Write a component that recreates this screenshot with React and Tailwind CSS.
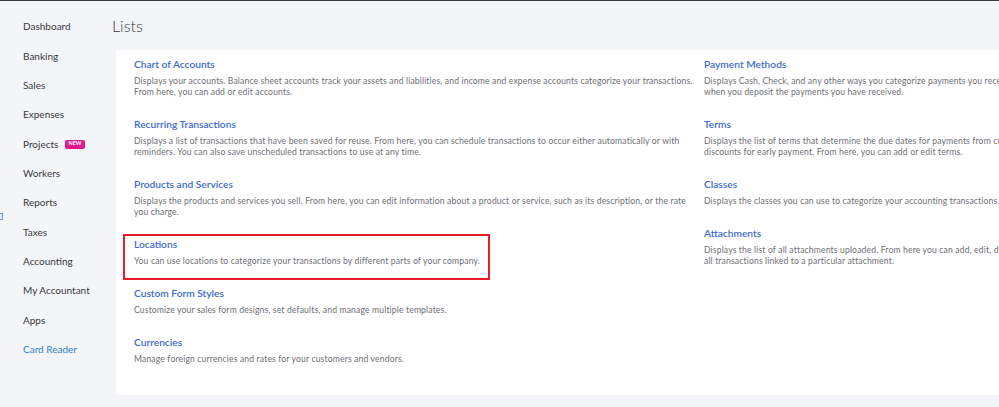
const navItems = [
  'Dashboard',
  'Banking',
  'Sales',
  'Expenses',
  'Projects',
  'Workers',
  'Reports',
  'Taxes',
  'Accounting',
  'My Accountant',
  'Apps',
];

const leftLists = [
  {
    title: 'Chart of Accounts',
    lines: [
      'Displays your accounts. Balance sheet accounts track your assets and liabilities, and income and expense accounts categorize your transactions.',
      'From here, you can add or edit accounts.',
    ],
  },
  {
    title: 'Recurring Transactions',
    lines: [
      'Displays a list of transactions that have been saved for reuse. From here, you can schedule transactions to occur either automatically or with',
      'reminders. You can also save unscheduled transactions to use at any time.',
    ],
  },
  {
    title: 'Products and Services',
    lines: [
      'Displays the products and services you sell. From here, you can edit information about a product or service, such as its description, or the rate',
      'you charge.',
    ],
  },
  {
    title: 'Locations',
    lines: ['You can use locations to categorize your transactions by different parts of your company.'],
    highlight: true,
  },
  {
    title: 'Custom Form Styles',
    lines: ['Customize your sales form designs, set defaults, and manage multiple templates.'],
  },
  {
    title: 'Currencies',
    lines: ['Manage foreign currencies and rates for your customers and vendors.'],
  },
];

const rightLists = [
  {
    title: 'Payment Methods',
    lines: [
      'Displays Cash, Check, and any other ways you categorize payments you receive from customers. Also set up payment methods to use',
      'when you deposit the payments you have received.',
    ],
  },
  {
    title: 'Terms',
    lines: [
      'Displays the list of terms that determine the due dates for payments from customers, or payments to vendors. Terms can also specify',
      'discounts for early payment. From here, you can add or edit terms.',
    ],
  },
  {
    title: 'Classes',
    lines: ['Displays the classes you can use to categorize your accounting transactions.'],
  },
  {
    title: 'Attachments',
    lines: [
      'Displays the list of all attachments uploaded. From here you can add, edit, download, and export your attachments. You can also see',
      'all transactions linked to a particular attachment.',
    ],
  },
];

const ListSection = ({ item }) => (
  <div className="relative mb-[19px]">
    {/* red annotation box round the highlighted entry */}
    {item.highlight && (
      <div className="absolute left-[-11px] top-[-3px] w-[367px] h-[46px] border-2 border-[#ea1c24]"></div>
    )}
    <div className="text-[10.2px] leading-[14px] font-semibold text-[#3a6bcf] whitespace-nowrap">{item.title}</div>
    <div className="mt-[5px] text-[8.6px] leading-[11px] tracking-[0.15px] text-[#6e6f75]">
      {item.lines.map((line) => (
        <div key={line} className="whitespace-nowrap">{line}</div>
      ))}
    </div>
  </div>
);

export default function App() {
  return (
    <div
      className="relative w-[999px] h-[407px] overflow-hidden bg-[#f4f5f8] border-t border-[#393a3d]"
      style={{ fontFamily: 'Lato, "Open Sans", sans-serif' }}
    >
      {/* little collapse handle at the left edge */}
      <div className="absolute left-[-2px] top-[212px] w-[5px] h-[7px] border border-[#7d9bc4] bg-[#dfe8f5]"></div>

      <div className="flex">
        {/* Sidebar */}
        <nav className="w-[112px] shrink-0 pt-[11px] pl-[23px]">
          {navItems.map((name) => (
            <div key={name} className="h-[29.36px] flex items-center text-[10px] text-[#393a3d] whitespace-nowrap">
              {name}
              {name === 'Projects' && (
                <span className="ml-[7px] px-[3px] h-[9px] flex items-center rounded-[2px] bg-[#e5178a] text-white text-[5.5px] font-bold leading-none">
                  NEW
                </span>
              )}
            </div>
          ))}
          <div className="h-[29.36px] flex items-center text-[10px] text-[#2d82cf] whitespace-nowrap">Card Reader</div>
        </nav>

        {/* Main */}
        <main className="flex-1 min-w-0">
          <h1 className="h-[49px] pt-[15px] text-[16px] leading-[20px] font-light text-[#393a3d]">Lists</h1>
          <div className="ml-[4px] h-[345px] bg-white pt-[7px] pl-[18px] flex">
            <div className="w-[570px] shrink-0">
              {leftLists.map((item) => (
                <ListSection key={item.title} item={item} />
              ))}
            </div>
            <div className="min-w-0 overflow-hidden">
              {rightLists.map((item) => (
                <ListSection key={item.title} item={item} />
              ))}
            </div>
          </div>
        </main>
      </div>
    </div>
  );
}
